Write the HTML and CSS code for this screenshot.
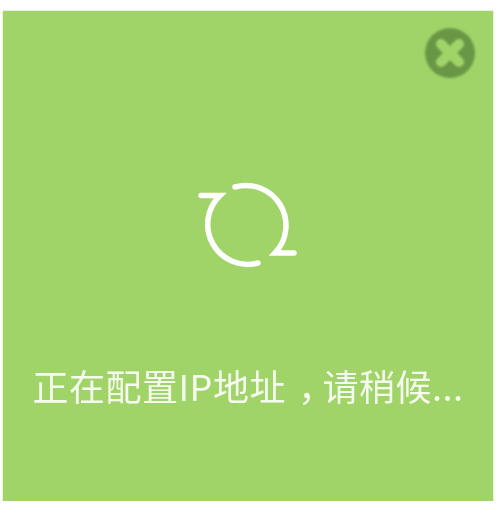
FILE: index.html
```html
<!DOCTYPE html>
<html lang="zh-CN">
<head>
<meta charset="utf-8">
<title>正在配置IP地址</title>
<link rel="stylesheet" href="styles.css">
</head>
<body>
<div class="panel">
  <svg class="close" viewBox="0 0 50 50" aria-label="关闭">
    <circle class="close-disc" cx="25" cy="25" r="25"/>
    <path class="close-x" d="M16 16 34 34M34 16 16 34"/>
  </svg>
  <svg class="spinner" viewBox="0 0 100 90" aria-hidden="true">
    <path class="spin-path" d="M37 7A40 40 0 0 1 77 73L96 73"/>
    <path class="spin-path" d="M60 83A40 40 0 0 1 22 15.500L3 15.500"/>
  </svg>
  <p class="message">正在配置IP地址<span class="comma">，</span>请稍候...</p>
</div>
</body>
</html>
```
FILE: styles.css
```css
html, body {
  margin: 0;
  padding: 0;
  background: #fff;
}
.panel {
  position: relative;
  box-sizing: border-box;
  width: 490px;
  height: 490px;
  margin: 11px 0 0 3px;
  padding-top: 169px;
  background: #a0d468;
  display: flex;
  flex-direction: column;
  align-items: center;
  box-shadow: 0 0 1.500px #a0d468;
}
.close {
  position: absolute;
  top: 17px;
  right: 18px;
  width: 50px;
  height: 50px;
  filter: blur(1px);
}
.close-disc {
  fill: #6a9746;
}
.close-x {
  fill: none;
  stroke: #a0d468;
  stroke-width: 10;
  stroke-linecap: round;
}
.spinner {
  width: 100px;
  height: 90px;
  filter: blur(0.7px);
}
.spin-path {
  fill: none;
  stroke: #fff;
  stroke-width: 5.500;
  stroke-linecap: round;
  stroke-linejoin: miter;
}
.message {
  margin: 90px 0 0;
  font-family: "Noto Sans CJK SC", "Liberation Sans", sans-serif;
  font-size: 36px;
  letter-spacing: 0.500px;
  line-height: 50px;
  color: #f6fbef;
  white-space: nowrap;
  filter: blur(0.7px);
}
.comma {
  display: inline-block;
  margin: 0 6px 0 12px;
  font-feature-settings: "halt";
}
```
